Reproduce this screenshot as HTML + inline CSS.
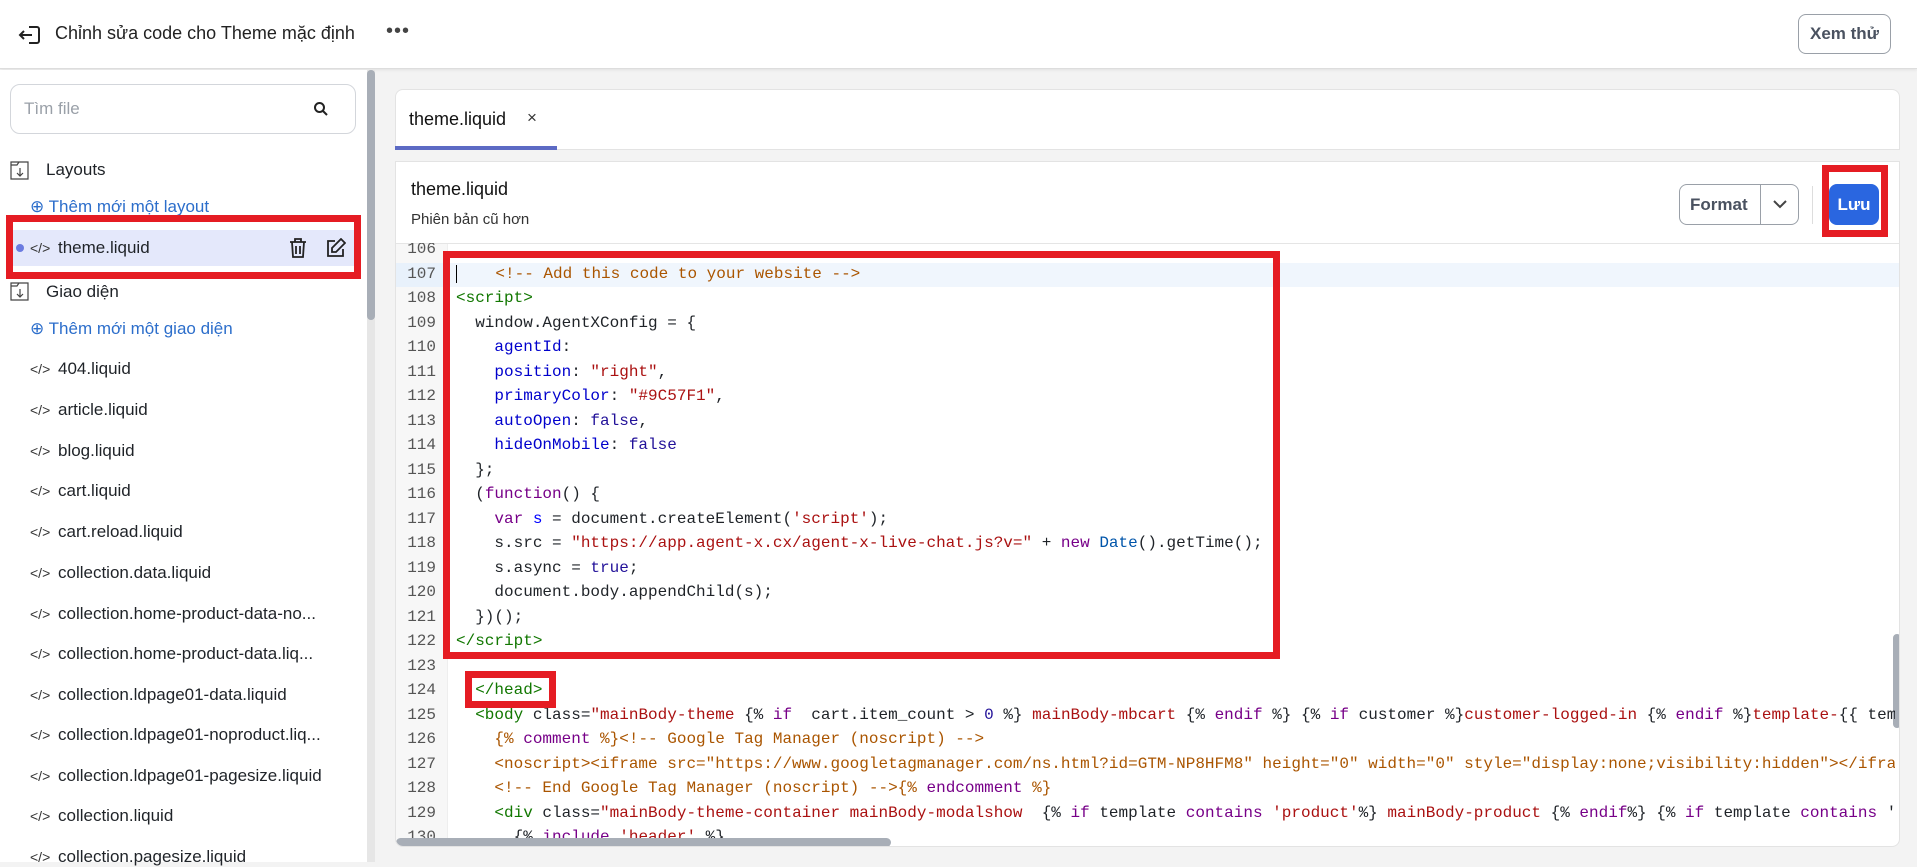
<!DOCTYPE html>
<html><head><meta charset="utf-8"><style>
*{box-sizing:border-box;margin:0;padding:0}
body{width:1917px;height:862px;overflow:hidden;background:#f3f3f3;font-family:"Liberation Sans",sans-serif;position:relative;color:#1f2328}
.abs{position:absolute}
.hdr{left:0;top:0;width:1917px;height:69px;background:#fff;border-bottom:1px solid #ddd;box-shadow:0 1px 3px rgba(0,0,0,.08)}
.side{left:0;top:70px;width:367px;height:792px;background:#fff}
.sb{left:367px;top:70px;width:8px;height:792px;background:#e6e6e6}
.sbth{left:367px;top:70px;width:8px;height:250px;background:#a8aeb7;border-radius:4px}
.item{position:absolute;left:30px;font-size:17px;color:#1f2328;white-space:nowrap}
.item .ic{display:inline-block;width:28px;font-size:14px;color:#333}
.blue{color:#2c6ecb}
.code{font-family:"Liberation Mono",monospace;font-size:16px;white-space:pre;position:absolute;left:456px;line-height:24.5px}
.ln{position:absolute;left:400px;width:36px;text-align:right;font-family:"Liberation Mono",monospace;font-size:16px;color:#555;line-height:24.5px}
.c{color:#a50}.t{color:#170}.p{color:#00c}.s{color:#a11}.k{color:#708}.a{color:#219}.v{color:#05a}.d{color:#00f}
.red{position:absolute;border:7px solid #e51c23}
</style></head><body>
<div class="abs hdr"></div>
<svg class="abs" style="left:17px;top:23px" width="26" height="24" viewBox="0 0 26 24" fill="none" stroke="#222" stroke-width="2"><path d="M12 4h8a2 2 0 0 1 2 2v12a2 2 0 0 1-2 2h-8"/><path d="M3 12h12M7 8l-4 4 4 4"/></svg>
<div class="abs" style="left:55px;top:23px;font-size:18px;color:#222">Chỉnh sửa code cho Theme mặc định</div>
<div class="abs" style="left:386px;top:20px;font-size:20px;letter-spacing:1px;color:#444">•••</div>
<div class="abs" style="left:1798px;top:14px;width:93px;height:40px;border:1px solid #9aa0a8;border-radius:8px;font-size:17px;font-weight:bold;color:#4a5260;text-align:center;line-height:38px">Xem thử</div>

<div class="abs side"></div>
<div class="abs sb"></div><div class="abs sbth"></div>
<div class="abs" style="left:10px;top:84px;width:346px;height:50px;border:1px solid #d3d6db;border-radius:10px"></div>
<div class="abs" style="left:24px;top:99px;font-size:17px;color:#9aa0a8">Tìm file</div>
<svg class="abs" style="left:313px;top:101px" width="16" height="16" viewBox="0 0 16 16" fill="none" stroke="#222" stroke-width="2"><circle cx="6.5" cy="6.5" r="4.5"/><path d="M10 10l4 4"/></svg>

<svg class="abs" style="left:10px;top:160px" width="20" height="20" viewBox="0 0 20 20" fill="none" stroke="#444" stroke-width="1.2"><path d="M1 2h17v17H1zM1 5h6l2-3"/><path d="M10 8v8M7 13l3 3 3-3"/></svg>
<div class="item" style="left:46px;top:160px">Layouts</div>
<div class="item blue" style="top:197px">⊕ Thêm mới một layout</div>
<div class="abs" style="left:12px;top:230px;width:342px;height:36px;background:#e4e8fb"></div>
<div class="abs" style="left:16px;top:244px;width:8px;height:8px;border-radius:50%;background:#6b7be0"></div>
<div class="item" style="top:238px"><span class="ic">&lt;/&gt;</span>theme.liquid</div>
<svg class="abs" style="left:289px;top:238px" width="18" height="20" viewBox="0 0 18 20" fill="none" stroke="#222" stroke-width="1.8"><path d="M1 4h16M6 4V1h6v3M3 4l1 15h10l1-15M7 8v8M11 8v8"/></svg>
<svg class="abs" style="left:326px;top:238px" width="20" height="20" viewBox="0 0 20 20" fill="none" stroke="#222" stroke-width="1.8"><path d="M9 3H2v15h15v-7"/><path d="M15 1l4 4-9 9H6v-4z"/></svg>
<div class="red" style="left:6px;top:215px;width:355px;height:64px"></div>
<svg class="abs" style="left:10px;top:281px" width="20" height="20" viewBox="0 0 20 20" fill="none" stroke="#444" stroke-width="1.2"><path d="M1 2h17v17H1zM1 5h6l2-3"/><path d="M10 8v8M7 13l3 3 3-3"/></svg>
<div class="item" style="left:46px;top:282px">Giao diện</div>
<div class="item blue" style="top:319px">⊕ Thêm mới một giao diện</div>
<div class="item" style="top:359px"><span class="ic">&lt;/&gt;</span>404.liquid</div>
<div class="item" style="top:400px"><span class="ic">&lt;/&gt;</span>article.liquid</div>
<div class="item" style="top:441px"><span class="ic">&lt;/&gt;</span>blog.liquid</div>
<div class="item" style="top:481px"><span class="ic">&lt;/&gt;</span>cart.liquid</div>
<div class="item" style="top:522px"><span class="ic">&lt;/&gt;</span>cart.reload.liquid</div>
<div class="item" style="top:563px"><span class="ic">&lt;/&gt;</span>collection.data.liquid</div>
<div class="item" style="top:604px"><span class="ic">&lt;/&gt;</span>collection.home-product-data-no...</div>
<div class="item" style="top:644px"><span class="ic">&lt;/&gt;</span>collection.home-product-data.liq...</div>
<div class="item" style="top:685px"><span class="ic">&lt;/&gt;</span>collection.ldpage01-data.liquid</div>
<div class="item" style="top:725px"><span class="ic">&lt;/&gt;</span>collection.ldpage01-noproduct.liq...</div>
<div class="item" style="top:766px"><span class="ic">&lt;/&gt;</span>collection.ldpage01-pagesize.liquid</div>
<div class="item" style="top:806px"><span class="ic">&lt;/&gt;</span>collection.liquid</div>
<div class="item" style="top:847px"><span class="ic">&lt;/&gt;</span>collection.pagesize.liquid</div>

<div class="abs" style="left:395px;top:89px;width:1505px;height:61px;background:#fff;border:1px solid #e3e3e3;border-radius:8px 8px 0 0"></div>
<div class="abs" style="left:409px;top:109px;font-size:18px;color:#111">theme.liquid</div>
<div class="abs" style="left:527px;top:108px;font-size:17px;color:#333">×</div>
<div class="abs" style="left:395px;top:146px;width:162px;height:4px;background:#5c6ac4"></div>

<div class="abs" style="left:395px;top:161px;width:1505px;height:686px;background:#fff;border:1px solid #e3e3e3;border-radius:0 0 8px 8px;overflow:hidden">
 <div class="abs" style="left:0;top:81px;width:1505px;height:1px;background:#e5e5e5"></div>
 <div class="abs" style="left:0;top:82px;width:52px;height:604px;background:#f7f7f7;border-right:1px solid #eee"></div>
 <div class="abs" style="left:52px;top:101px;width:1453px;height:24px;background:#f0f6fd"></div>
 <div class="abs" style="left:0;top:101px;width:52px;height:24px;background:#e8f1fb"></div>
 <div class="abs" style="left:0;top:676px;width:495px;height:9px;border-radius:5px;background:#a8aeb7"></div>
 <div class="abs" style="left:1497px;top:472px;width:8px;height:94px;background:#a8aeb7;border-radius:4px"></div>
</div>
<div class="abs" style="left:411px;top:179px;font-size:18px;color:#111">theme.liquid</div>
<div class="abs" style="left:411px;top:211px;font-size:15px;color:#333">Phiên bản cũ hơn</div>
<div class="abs" style="left:1679px;top:184px;width:120px;height:41px;border:1px solid #9aa0a8;border-radius:8px"></div>
<div class="abs" style="left:1760px;top:184px;width:1px;height:41px;background:#9aa0a8"></div>
<div class="abs" style="left:1690px;top:195px;font-size:17px;font-weight:bold;color:#4a5260">Format</div>
<svg class="abs" style="left:1772px;top:198px" width="16" height="12" viewBox="0 0 16 12" fill="none" stroke="#444" stroke-width="2"><path d="M2 3l6 6 6-6"/></svg>
<div class="abs" style="left:1812px;top:186px;width:1px;height:38px;background:#ddd"></div>
<div class="abs" style="left:1829px;top:184px;width:50px;height:41px;background:#2a66e0;border-radius:8px;color:#fff;font-size:17px;font-weight:bold;text-align:center;line-height:41px">Lưu</div>
<div class="red" style="left:1822px;top:165px;width:66px;height:72px"></div>

<div class="abs" style="left:395px;top:243px;width:1500px;height:595px;overflow:hidden">
<div class="ln" style="left:5px;top:-6px">106<br>107<br>108<br>109<br>110<br>111<br>112<br>113<br>114<br>115<br>116<br>117<br>118<br>119<br>120<br>121<br>122<br>123<br>124<br>125<br>126<br>127<br>128<br>129<br>130</div>
<div class="code" style="left:61px;top:-6px">
<span style="border-left:1px solid #000"> </span>   <span class="c">&lt;!-- Add this code to your website --&gt;</span>
<span class="t">&lt;script&gt;</span>
  window.AgentXConfig = {
    <span class="p">agentId</span>:
    <span class="p">position</span>: <span class="s">"right"</span>,
    <span class="p">primaryColor</span>: <span class="s">"#9C57F1"</span>,
    <span class="p">autoOpen</span>: <span class="a">false</span>,
    <span class="p">hideOnMobile</span>: <span class="a">false</span>
  };
  (<span class="k">function</span>() {
    <span class="k">var</span> <span class="d">s</span> = document.createElement(<span class="s">'script'</span>);
    s.src = <span class="s">"https://app.agent-x.cx/agent-x-live-chat.js?v="</span> + <span class="k">new</span> <span class="v">Date</span>().getTime();
    s.async = <span class="a">true</span>;
    document.body.appendChild(s);
  })();
<span class="t">&lt;/script&gt;</span>

  <span class="t">&lt;/head&gt;</span>
  <span class="t">&lt;body</span> class=<span class="s">"mainBody-theme </span>{% <span class="k">if</span>  cart.item_count &gt; <span class="a">0</span> %}<span class="s"> mainBody-mbcart </span>{% <span class="k">endif</span> %} {% <span class="k">if</span> customer %}<span class="s">customer-logged-in </span>{% <span class="k">endif</span> %}<span class="s">template-</span>{{ template }}
    <span class="c">{% <span class="k">comment</span> %}&lt;!-- Google Tag Manager (noscript) --&gt;</span>
    <span class="c">&lt;noscript&gt;&lt;iframe src="https://www.googletagmanager.com/ns.html?id=GTM-NP8HFM8" height="0" width="0" style="display:none;visibility:hidden"&gt;&lt;/iframe&gt;</span>
    <span class="c">&lt;!-- End Google Tag Manager (noscript) --&gt;{% <span class="k">endcomment</span> %}</span>
    <span class="t">&lt;div</span> class=<span class="s">"mainBody-theme-container mainBody-modalshow  </span>{% <span class="k">if</span> template <span class="k">contains</span> <span class="s">'product'</span>%}<span class="s"> mainBody-product </span>{% <span class="k">endif</span>%} {% <span class="k">if</span> template <span class="k">contains</span> 'collection'%}
      {% <span class="k">include</span> <span class="s">'header'</span> %}</div>
</div>
<div class="red" style="left:443px;top:251px;width:837px;height:408px"></div>
<div class="red" style="left:465px;top:671px;width:91px;height:37px"></div>
</body></html>
